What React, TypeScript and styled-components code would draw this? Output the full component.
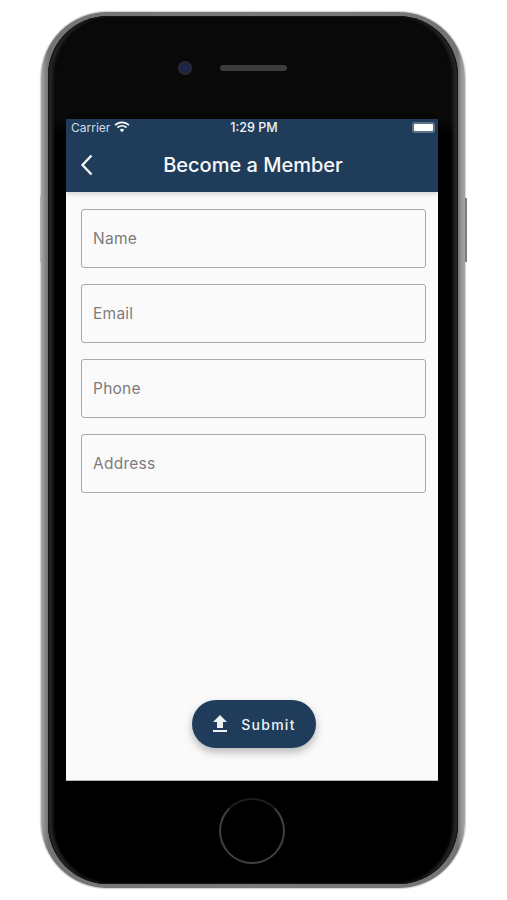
import React from "react";
import styled, { createGlobalStyle } from "styled-components";
import { MdFileUpload } from "react-icons/md";

const GlobalStyle = createGlobalStyle`
  html, body {
    margin: 0;
    padding: 0;
    background: #ffffff;
  }
  * {
    box-sizing: border-box;
  }
`;

const fields = ["Name", "Email", "Phone", "Address"];

const App: React.FC = () => {
  return (
    <Page>
      <GlobalStyle />
      <Phone>
        <VolumeButton />
        <PowerButton />
        <Bezel>
          <TopBezel>
            <Camera />
            <Speaker />
          </TopBezel>
          <Screen>
            <Header>
              <StatusBar>
                <Carrier>
                  Carrier
                  <svg width="16" height="12" viewBox="0 0 16 12">
                    <path d="M1 4.2a10 10 0 0 1 14 0" fill="none" stroke="#f4f6f8" strokeWidth="1.7" />
                    <path d="M3.4 6.6a6.6 6.6 0 0 1 9.2 0" fill="none" stroke="#f4f6f8" strokeWidth="1.7" />
                    <path d="M5.7 8.8a3.3 3.3 0 0 1 4.6 0L8 11.2z" fill="#f4f6f8" />
                  </svg>
                </Carrier>
                <Clock>1:29 PM</Clock>
                <Battery />
              </StatusBar>
              <NavBar>
                <BackIcon width="14" height="22" viewBox="0 0 14 22">
                  <path d="M11.5 1.5L2.5 11l9 9.5" fill="none" stroke="#f4f6f8" strokeWidth="2.4" />
                </BackIcon>
                <Title>Become a Member</Title>
              </NavBar>
            </Header>
            <Form>
              {fields.map((f) => (
                <Field key={f}>{f}</Field>
              ))}
              <Spacer />
              <SubmitButton>
                <MdFileUpload size={24} />
                Submit
              </SubmitButton>
            </Form>
          </Screen>
          <BottomBezel>
            <HomeButton />
          </BottomBezel>
        </Bezel>
      </Phone>
    </Page>
  );
};

const Page = styled.div`
  width: 507px;
  height: 900px;
  padding: 12px 42px 12px 41px;
  background: #ffffff;
  overflow: hidden;
`;
const Phone = styled.div`
  position: relative;
  width: 424px;
  height: 876px;
  padding: 4px 7px;
  border-radius: 66px;
  background: linear-gradient(
    90deg,
    #a8a8a8 0%,
    #868686 1%,
    #747474 1.7%,
    #7a7a7a 50%,
    #747474 98.3%,
    #909090 99%,
    #a8a8a8 100%
  );
  box-shadow: 0 0 1px 1px #d2d2d2;
`;
const VolumeButton = styled.div`
  position: absolute;
  left: -1px;
  top: 184px;
  width: 1px;
  height: 66px;
  background: #b4b4b4;
`;
const PowerButton = styled.div`
  position: absolute;
  right: -2px;
  top: 186px;
  width: 2px;
  height: 64px;
  background: #7c7c7c;
`;
const Bezel = styled.div`
  display: flex;
  flex-direction: column;
  height: 100%;
  padding: 0 20px 0 18px;
  border-radius: 60px;
  background: linear-gradient(180deg, #090909 12%, #000000 14%);
  box-shadow: inset 0 0 0 1px #161616, inset 6px 0 3px -1px #252525, inset -6px 0 3px -1px #252525;
  overflow: hidden;
`;
const TopBezel = styled.div`
  display: flex;
  align-items: center;
  flex: 0 0 103px;
  gap: 28px;
  padding: 0 0 0 112px;
`;
const Camera = styled.div`
  width: 14px;
  height: 14px;
  border-radius: 50%;
  background: radial-gradient(circle, #1e2a6b 0%, #1c2340 35%, #2c2c2e 70%, #1a1a1a 100%);
`;
const Speaker = styled.div`
  width: 67px;
  height: 6px;
  border-radius: 3px;
  background: #3d3d3d;
`;
const Screen = styled.div`
  display: flex;
  flex-direction: column;
  flex: 0 0 662px;
  background: #fafafa;
  border-bottom: 1px solid #b5b5b5;
`;
const Header = styled.header`
  flex: 0 0 73px;
  background: #1f3d5a;
  box-shadow: 0 2px 5px rgba(0, 0, 0, 0.16);
  color: #ffffff;
`;
const StatusBar = styled.div`
  display: flex;
  align-items: center;
  justify-content: space-between;
  height: 16px;
  padding: 0 3px 0 5px;
  font-family: Inter, "Liberation Sans", sans-serif;
  font-size: 12px;
`;
const Carrier = styled.span`
  display: flex;
  align-items: center;
  gap: 4px;
  width: 100px;
  color: #d3dbe3;
`;
const Clock = styled.span`
  font-size: 12.5px;
  font-weight: 500;
  color: #eef1f4;
`;
const Battery = styled.div`
  width: 23px;
  height: 11px;
  margin-left: 75px;
  border: 2px solid #5d7287;
  border-radius: 3px;
  background: #ffffff;
`;
const NavBar = styled.div`
  position: relative;
  display: flex;
  align-items: center;
  justify-content: center;
  height: 57px;
  padding: 2px 0 0 2px;
`;
const BackIcon = styled.svg`
  position: absolute;
  left: 14px;
  top: 19px;
`;
const Title = styled.h1`
  margin: 0;
  font-family: Inter, "Liberation Sans", sans-serif;
  font-size: 20px;
  font-weight: 500;
  color: #f6f7f9;
`;
const Form = styled.div`
  display: flex;
  flex-direction: column;
  flex: 1;
  gap: 16px;
  padding: 17px 12px 32px 15px;
`;
const Field = styled.div`
  display: flex;
  align-items: center;
  height: 59px;
  padding-left: 11px;
  border: 1px solid #a9a9a9;
  border-radius: 3px;
  font-family: Inter, "Liberation Sans", sans-serif;
  font-size: 15.5px;
  letter-spacing: 0.25px;
  color: #7c7c7c;
`;
const Spacer = styled.div`
  flex: 1;
`;
const SubmitButton = styled.button`
  display: flex;
  align-items: center;
  justify-content: center;
  gap: 9px;
  align-self: center;
  width: 124px;
  height: 48px;
  margin-left: 1px;
  padding: 0 4px 0 0;
  border: none;
  border-radius: 24px;
  background: #1f3d5a;
  box-shadow: 0 4px 8px rgba(0, 0, 0, 0.28);
  font-family: Inter, "Liberation Sans", sans-serif;
  font-size: 14px;
  font-weight: 500;
  letter-spacing: 1.25px;
  color: #eef1f4;
`;
const BottomBezel = styled.div`
  display: flex;
  align-items: center;
  justify-content: center;
  flex: 1;
  padding: 0 1px 4px 0;
`;
const HomeButton = styled.div`
  width: 66px;
  height: 66px;
  border-radius: 50%;
  border: 2px solid #404040;
  border-top-color: #1c1c1c;
`;

export default App;
